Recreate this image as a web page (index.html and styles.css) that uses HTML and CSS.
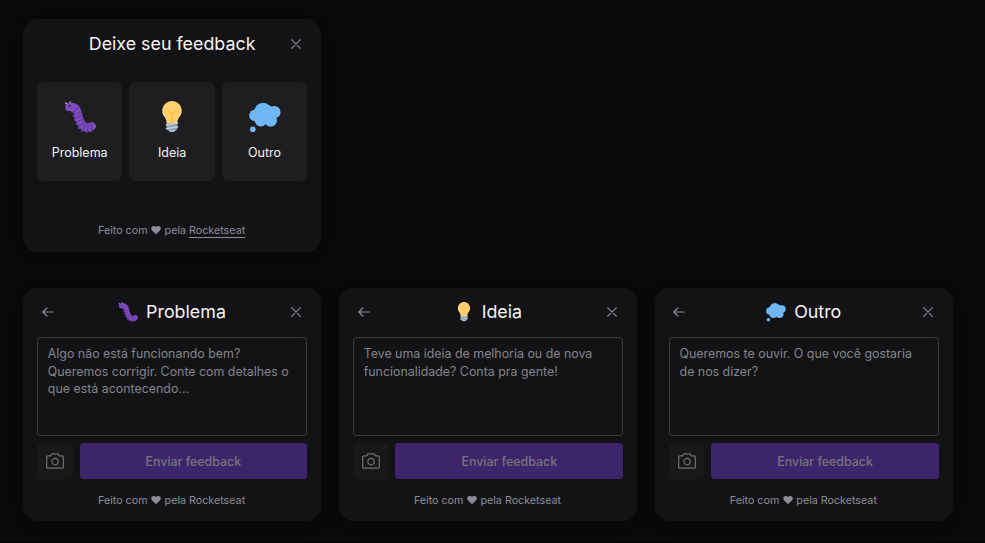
FILE: index.html
```
<!DOCTYPE html>
<html lang="pt-BR">
<head>
<meta charset="utf-8">
<title>Feedback widget</title>
<link rel="stylesheet" href="styles.css">
</head>
<body>
<svg class="sprite" aria-hidden="true">
  <symbol id="bug" viewBox="0 0 36 36">
    <g fill="#6a3fa6"><circle cx="9" cy="12" r="1.3"/><circle cx="11" cy="17" r="1.3"/><circle cx="12.4" cy="21" r="1.3"/><circle cx="14.4" cy="25.5" r="1.3"/><circle cx="17" cy="30.5" r="1.3"/><circle cx="20.5" cy="33.6" r="1.3"/><circle cx="25.2" cy="34.6" r="1.3"/><circle cx="30" cy="34" r="1.3"/></g>
    <path d="M2 2.2 4.2 5M7 1.2 6.2 4" stroke="#be9ce6" stroke-width="1.7" stroke-linecap="round"/>
    <path d="M6 6.7C17 5.500 14.500 14 17 20c2.200 6 5 9.600 9 9.600 2.500 0 4-.3 5.200-1.200" fill="none" stroke="#7e4bc0" stroke-width="9.200" stroke-linecap="round" stroke-linejoin="round"/>
    <path d="M11.200 12.200 16.400 7M11.600 15.400q4-.4 7-3.400M12.400 19.200q4.200-.4 7.200-3.200M14 23.500q4.500-.8 7-3.800M16.500 28q4.500-1.500 6-5M21.300 32.800q2.600-3.500 2.200-7.500M26.200 34q1.700-4 .2-8.200M30.800 32.700q1.500-3.500-.3-7.400" fill="none" stroke="#5f3896" stroke-width="1.200"/>
    <circle cx="6.600" cy="5.400" r="1.050" fill="#20152e"/>
  </symbol>
  <symbol id="bulb" viewBox="0 0 36 36">
    <path fill="#ffd170" d="M29 11.060c0 6.439-5 7.439-5 13.440 0 3.098-3.123 3.359-5.500 3.359-2.053 0-6.586-.779-6.586-3.361C11.914 18.500 7 17.500 7 11.060 7 5.029 12.285.14 18.083.14 23.883.14 29 5.029 29 11.060z"/>
    <path fill="#b8c8d1" d="M22.167 32.500c0 .828-2.234 2.500-4.167 2.500-1.933 0-4.167-1.672-4.167-2.500 0-.828 2.233-.5 4.167-.5 1.933 0 4.167-.328 4.167.5z"/>
    <path fill="#ffc043" d="M22.707 10.293c-.391-.391-1.023-.391-1.414 0L18 13.586l-3.293-3.293c-.391-.391-1.023-.391-1.414 0s-.391 1.023 0 1.414L17 15.414V26c0 .553.447 1 1 1s1-.447 1-1V15.414l3.707-3.707c.391-.391.391-1.023 0-1.414z"/>
    <path fill="#8c9da8" d="M24 31c0 1.104-.896 2-2 2h-8c-1.104 0-2-.896-2-2v-6h12v6z"/>
    <path d="M12 27l12-2M12 31l12-2" stroke="#bdcdd6" stroke-width="2" stroke-linecap="round"/>
  </symbol>
  <symbol id="cloud" viewBox="0 0 36 36">
    <g fill="#70b7f5"><circle cx="15.900" cy="11.600" r="9.700"/><circle cx="6.900" cy="16.200" r="6.700"/><circle cx="28.600" cy="12.600" r="6.900"/><circle cx="13.300" cy="21.500" r="7.100"/><circle cx="24.400" cy="21.800" r="7.100"/><circle cx="21" cy="14" r="9"/><circle cx="4.300" cy="31.800" r="3.200"/></g>
  </symbol>
  <symbol id="close" viewBox="0 0 10 10"><path d="M.6.6l8.800 8.800M9.400.6.6 9.400" fill="none" stroke="currentColor" stroke-width="1.100" stroke-linecap="round"/></symbol>
  <symbol id="back" viewBox="0 0 12 10"><path d="M11.200 5H.9M5 .8.8 5 5 9.200" fill="none" stroke="currentColor" stroke-width="1.200" stroke-linecap="round" stroke-linejoin="round"/></symbol>
  <symbol id="camera" viewBox="0 0 18 16"><path d="M2 2.900h2.700L6 .9h6l1.300 2H16A1.300 1.300 0 0 1 17.300 4.200v9.700a1.300 1.300 0 0 1-1.300 1.300H2A1.300 1.300 0 0 1 .7 13.900V4.200A1.300 1.300 0 0 1 2 2.900z" fill="none" stroke="currentColor" stroke-width="1.200" stroke-linejoin="round"/><circle cx="9" cy="8.600" r="3.200" fill="none" stroke="currentColor" stroke-width="1.200"/></symbol>
  <symbol id="heart" viewBox="0 0 10 9"><path d="M5 8.300 1.100 4.500C-.2 3.200 0 1.500 1.100.6 2.300-.4 4.100-.2 5 1.200 5.900-.2 7.700-.4 8.900.6 10 1.500 10.200 3.200 8.900 4.500z" fill="currentColor"/></symbol>
</svg>
<main class="board">
  <section class="card">
    <header class="head">
      <h2 class="title">Deixe seu feedback</h2>
      <svg class="close"><use href="#close"/></svg>
    </header>
    <div class="types">
      <div class="type"><svg class="emoji"><use href="#bug"/></svg><span>Problema</span></div>
      <div class="type"><svg class="emoji"><use href="#bulb"/></svg><span>Ideia</span></div>
      <div class="type"><svg class="emoji"><use href="#cloud"/></svg><span>Outro</span></div>
    </div>
    <footer class="foot"><span>Feito com</span><svg class="heart"><use href="#heart"/></svg><span>pela <a class="link">Rocketseat</a></span></footer>
  </section>
  <div class="row">
    <section class="card form">
      <header class="head">
        <svg class="back"><use href="#back"/></svg>
        <h2 class="title"><svg class="mini"><use href="#bug"/></svg>Problema</h2>
        <svg class="close"><use href="#close"/></svg>
      </header>
      <div class="area">Algo não está funcionando bem?<br>Queremos corrigir. Conte com detalhes o<br>que está acontecendo...</div>
      <div class="actions"><div class="shot"><svg class="camera"><use href="#camera"/></svg></div><div class="send">Enviar feedback</div></div>
      <footer class="foot"><span>Feito com</span><svg class="heart"><use href="#heart"/></svg><span>pela Rocketseat</span></footer>
    </section>
    <section class="card form">
      <header class="head">
        <svg class="back"><use href="#back"/></svg>
        <h2 class="title"><svg class="mini"><use href="#bulb"/></svg>Ideia</h2>
        <svg class="close"><use href="#close"/></svg>
      </header>
      <div class="area">Teve uma ideia de melhoria ou de nova<br>funcionalidade? Conta pra gente!</div>
      <div class="actions"><div class="shot"><svg class="camera"><use href="#camera"/></svg></div><div class="send">Enviar feedback</div></div>
      <footer class="foot"><span>Feito com</span><svg class="heart"><use href="#heart"/></svg><span>pela Rocketseat</span></footer>
    </section>
    <section class="card form">
      <header class="head">
        <svg class="back"><use href="#back"/></svg>
        <h2 class="title"><svg class="mini"><use href="#cloud"/></svg>Outro</h2>
        <svg class="close"><use href="#close"/></svg>
      </header>
      <div class="area">Queremos te ouvir. O que você gostaria<br>de nos dizer?</div>
      <div class="actions"><div class="shot"><svg class="camera"><use href="#camera"/></svg></div><div class="send">Enviar feedback</div></div>
      <footer class="foot"><span>Feito com</span><svg class="heart"><use href="#heart"/></svg><span>pela Rocketseat</span></footer>
    </section>
  </div>
</main>
</body>
</html>
```
FILE: styles.css
```
* { box-sizing: border-box; }
body {
  margin: 0;
  height: 543px;
  overflow: hidden;
  background: #09090a;
  border-bottom: 1px solid #000;
  color: #f4f4f5;
  font-family: Inter, "Liberation Sans", sans-serif;
}
svg { display: block; flex: none; }
.sprite { display: none; }
.board { padding: 18.500px 0 0 23px; }
.row { display: flex; gap: 17.700px; margin-top: 35.600px; }
.card {
  flex: none;
  width: 298.200px;
  height: 233.500px;
  padding: 0 14px;
  border-radius: 14.200px;
  background: #131315;
  box-shadow: 0 4px 14px rgba(0, 0, 0, .15);
}
.head {
  display: grid;
  grid-template-columns: 20px 1fr 20px;
  align-items: center;
  height: 50px;
}
.title {
  grid-column: 2;
  display: flex;
  align-items: center;
  justify-content: center;
  gap: 7.800px;
  margin: 0;
  font-size: 17.850px;
  line-height: 22px;
  font-weight: 400;
  white-space: nowrap;
}
.close { grid-column: 3; justify-self: center; width: 10px; height: 10px; margin-right: 2px; color: #8d8d99; }
.back { width: 12px; height: 10px; margin-left: 4.700px; color: #8d8d99; }
.mini { width: 20px; height: 20px; }
.types { display: grid; grid-template-columns: repeat(3, 1fr); gap: 7.100px; margin-top: 13px; }
.type {
  display: flex;
  flex-direction: column;
  align-items: center;
  gap: 10.600px;
  height: 99.500px;
  padding-top: 19.500px;
  border-radius: 6.500px;
  background: #1e1e20;
  font-size: 12.500px;
  line-height: 18px;
}
.emoji { width: 32px; height: 32px; }
.foot {
  display: flex;
  align-items: center;
  justify-content: center;
  gap: 3.500px;
  height: 14px;
  margin: 42.600px 1px 0 0;
  color: #8d8d99;
  font-size: 10.720px;
  line-height: 14px;
  white-space: nowrap;
}
.heart { width: 10px; height: 9px; }
.link { text-decoration: underline; text-underline-offset: 2.500px; text-decoration-thickness: 1px; }
.form .head { height: 49px; }
.area {
  height: 99.500px;
  padding: 7.200px 9.800px;
  border: 1px solid #3d3d42;
  border-radius: 3.500px;
  color: #85858c;
  font-size: 12.400px;
  line-height: 17.720px;
  white-space: nowrap;
}
.actions { display: flex; gap: 7.100px; height: 35.500px; margin-top: 7.100px; }
.shot { display: flex; align-items: center; justify-content: center; width: 35.500px; border-radius: 3.500px; background: #18181a; color: #717174; }
.camera { width: 18px; height: 16px; }
.send {
  flex: 1;
  border-radius: 3.500px;
  background: #3d256b;
  color: #77747c;
  font-size: 12.400px;
  font-weight: 500;
  line-height: 37px;
  text-align: center;
}
.form .foot { margin-top: 15px; }
```
